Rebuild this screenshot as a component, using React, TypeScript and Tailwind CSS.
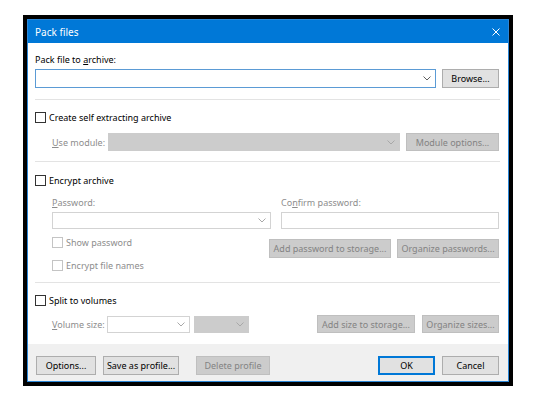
import React from "react";

const font = { fontFamily: '"Noto Sans", "Open Sans", sans-serif' };

function Chevron({ color = "#606060" }: { color?: string }) {
  return (
    <svg width="8" height="5" viewBox="0 0 8 5" className="shrink-0">
      <polyline points="0.5,0.5 4,4 7.5,0.5" fill="none" stroke={color} strokeWidth="1" />
    </svg>
  );
}

function Btn({ children, w, disabled, def }: { children: React.ReactNode; w: string; disabled?: boolean; def?: boolean }) {
  const base = "h-full flex items-center justify-center shrink-0 text-[9px] leading-none";
  if (disabled)
    return <div className={`${base} ${w} bg-[#cccccc] border border-[#bfbfbf] text-[#838383]`}>{children}</div>;
  if (def)
    return <div className={`${base} ${w} bg-[#e1e1e1] border-2 border-[#0078d7] text-black`}>{children}</div>;
  return <div className={`${base} ${w} bg-[#e1e1e1] border border-[#adadad] text-black`}>{children}</div>;
}

function Check({ label, disabled }: { label: string; disabled?: boolean }) {
  return (
    <div className="flex items-center h-[12px] gap-[3px]">
      <div className={`w-[11px] h-[11px] bg-white border ${disabled ? "border-[#c4c4c4]" : "border-[#333333]"}`} />
      <span className={`text-[9px] leading-none ${disabled ? "text-[#8d8d8d]" : "text-black"}`}>{label}</span>
    </div>
  );
}

function Sep() {
  return <div className="h-px bg-[#e3e3e3] w-[465px]" />;
}

export default function App() {
  return (
    <div className="w-[550px] h-[411px] bg-white pt-[15px] pl-[23px]" style={font}>
      <div className="w-[490px] h-[371px] border-4 border-black">
        <div className="w-full h-full flex flex-col border border-[#2b86d6] bg-white">
          {/* title bar */}
          <div className="h-[23px] bg-[#0078d7] flex items-center pl-[7px] pr-[8px] shrink-0">
            <span className="text-white text-[10px] leading-none">Pack files</span>
            <svg width="8" height="8" viewBox="0 0 8 8" className="ml-auto">
              <path d="M0.5 0.5 L7.5 7.5 M7.5 0.5 L0.5 7.5" stroke="white" strokeWidth="1" />
            </svg>
          </div>

          {/* body */}
          <div className="flex-1 flex flex-col pl-[7px] pr-[9px]">
            <div className="mt-[10px] h-[12px] flex items-center text-[9px] leading-none text-black">
              <span>Pack file to <u>a</u>rchive:</span>
            </div>
            <div className="mt-[4px] h-[19px] flex gap-[6px]">
              <div className="w-[401px] h-full bg-white border border-[#5b9bd5] flex items-center justify-end pr-[4px]">
                <Chevron />
              </div>
              <Btn w="w-[57px]">Browse...</Btn>
            </div>
            <div className="mt-[11px]"><Sep /></div>

            <div className="mt-[11px]"><Check label="Create self extracting archive" /></div>
            <div className="mt-[10px] h-[18px] flex items-center pl-[17px]">
              <span className="w-[56px] text-[9px] leading-none text-[#8d8d8d]"><u>U</u>se module:</span>
              <div className="w-[292px] h-full bg-[#cccccc] border border-[#cccccc] flex items-center justify-end pr-[4px]">
                <Chevron color="#a8a8a8" />
              </div>
              <div className="ml-[6px] h-full flex"><Btn w="w-[93px]" disabled>Module options...</Btn></div>
            </div>
            <div className="mt-[10px]"><Sep /></div>

            <div className="mt-[12px]"><Check label="Encrypt archive" /></div>
            <div className="mt-[10px] h-[12px] flex items-center pl-[17px] text-[9px] leading-none text-[#8d8d8d]">
              <span className="w-[229px]"><u>P</u>assword:</span>
              <span>Co<u>n</u>firm password:</span>
            </div>
            <div className="mt-[4px] h-[17px] flex pl-[17px] gap-[10px]">
              <div className="w-[219px] h-full bg-white border border-[#d3d3d3] flex items-center justify-end pr-[4px]">
                <Chevron color="#a8a8a8" />
              </div>
              <div className="w-[219px] h-full bg-white border border-[#d3d3d3]" />
            </div>
            <div className="mt-[7px] flex items-start pl-[17px]">
              <div className="flex flex-col gap-[11px]">
                <Check label="Show password" disabled />
                <Check label="Encrypt file names" disabled />
              </div>
              <div className="ml-auto mt-[3px] h-[19px] flex gap-[6px]">
                <Btn w="w-[122px]" disabled>Add password to storage...</Btn>
                <Btn w="w-[102px]" disabled>Organize passwords...</Btn>
              </div>
            </div>
            <div className="mt-[11px]"><Sep /></div>

            <div className="mt-[11px]"><Check label="Split to volumes" /></div>
            <div className="mt-[9px] h-[18px] flex items-center pl-[17px]">
              <span className="w-[55px] text-[9px] leading-none text-[#8d8d8d]"><u>V</u>olume size:</span>
              <div className="w-[83px] h-[17px] bg-white border border-[#d3d3d3] flex items-center justify-end pr-[4px]">
                <Chevron color="#a8a8a8" />
              </div>
              <div className="ml-[4px] w-[55px] h-[17px] bg-[#cccccc] border border-[#cccccc] flex items-center justify-end pr-[4px]">
                <Chevron color="#a8a8a8" />
              </div>
              <div className="ml-auto h-full flex gap-[7px]">
                <Btn w="w-[98px]" disabled>Add size to storage...</Btn>
                <Btn w="w-[77px]" disabled>Organize sizes...</Btn>
              </div>
            </div>
          </div>

          {/* footer */}
          <div className="h-[37px] bg-[#f0f0f0] shrink-0 flex pt-[12px] pl-[8px] pr-[9px]">
            <div className="h-[19px] flex">
              <Btn w="w-[60px]">Options...</Btn>
              <div className="ml-[7px] h-full flex"><Btn w="w-[76px]">Save as profile...</Btn></div>
              <div className="ml-[17px] h-full flex"><Btn w="w-[74px]" disabled>Delete profile</Btn></div>
            </div>
            <div className="ml-auto h-[19px] flex gap-[7px]">
              <Btn w="w-[57px]" def>OK</Btn>
              <Btn w="w-[57px]">Cancel</Btn>
            </div>
          </div>
        </div>
      </div>
    </div>
  );
}
